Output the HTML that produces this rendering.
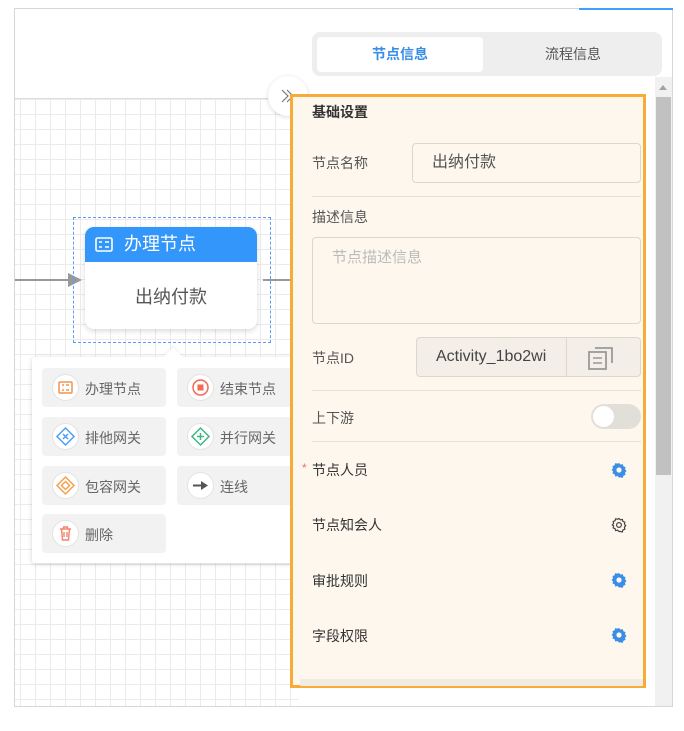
<!DOCTYPE html>
<html><head><meta charset="utf-8"><style>
*{box-sizing:border-box;margin:0;padding:0}
body{width:684px;height:731px;background:#fff;position:relative;overflow:hidden;font-family:"Liberation Sans","Noto Sans CJK SC",sans-serif;}
.abs{position:absolute}
.frame{left:14px;top:8px;width:659px;height:699px;border:1px solid #d6d6d6;}
.grid{left:15px;top:98px;width:283px;height:608px;border-top:1px solid #ddd;
background-image:linear-gradient(#ebebeb 1px,transparent 1px),linear-gradient(90deg,#ebebeb 1px,transparent 1px);background-size:15px 15px;background-position:5px 0}
.lbl{position:absolute;left:312px;font-size:14px;color:#555}
.div{position:absolute;left:312px;width:329px;height:1px;background:#eadfd0}
.btn{position:absolute;width:124px;height:39px;background:#f2f2f2;border-radius:4px;font-size:14px;color:#666}
.btn .ic{position:absolute;left:10px;top:6px;width:27px;height:27px;border-radius:50%;background:#fff;border:1px solid #e3e3e3}
.btn span{position:absolute;left:43px;top:11px}
</style></head><body>
<div class="abs frame"></div>
<div class="abs" style="left:579px;top:8px;width:94px;height:2px;background:#409eff"></div>
<div class="abs grid"></div>
<div class="abs" style="left:15px;top:279px;width:56px;height:2px;background:#999"></div>
<div class="abs" style="left:68px;top:273px;width:0;height:0;border-left:14px solid #999;border-top:7px solid transparent;border-bottom:7px solid transparent"></div>
<div class="abs" style="left:263px;top:279px;width:35px;height:2px;background:#999"></div>
<div class="abs" style="left:73px;top:217px;width:198px;height:126px;border:1.5px dashed #5a9cf8"></div>
<div class="abs" style="left:85px;top:227px;width:172px;height:102px;background:#fff;border-radius:9px;box-shadow:0 2px 6px rgba(0,0,0,.15);overflow:hidden">
<div style="height:35px;background:#3296fa;color:#fff;font-size:18px;line-height:35px;padding-left:39px;position:relative">办理节点
<svg style="position:absolute;left:10px;top:10px" width="18" height="15" viewBox="0 0 18 15"><rect x="1" y="1" width="16" height="13" rx="1.5" fill="none" stroke="#fff" stroke-width="1.6"/><path d="M4 5h3M4 10h3M10 5h4M10 10h4" stroke="#fff" stroke-width="1.6"/></svg></div>
<div style="text-align:center;font-size:18px;color:#555;margin-top:21px">出纳付款</div></div>
<div class="abs" style="left:32px;top:357px;width:266px;height:206px;background:#fff;box-shadow:0 1px 5px rgba(0,0,0,.18);border-radius:3px"></div>
<div class="abs" style="left:166px;top:350px;width:14px;height:14px;background:#fff;transform:rotate(45deg);box-shadow:-1px -1px 2px rgba(0,0,0,.06)"></div>
<div class="btn" style="left:42px;top:368px"><div class="ic"><svg width="25" height="25" viewBox="0 0 25 25"><rect x="6" y="7" width="13" height="11" rx="1" fill="none" stroke="#f0944d" stroke-width="1.5"/><path d="M9 10h2M9 15h2M13 10h3M13 15h3" stroke="#f0944d" stroke-width="1.5"/></svg></div><span>办理节点</span></div>
<div class="btn" style="left:177px;top:368px;width:121px"><div class="ic"><svg width="25" height="25"><circle cx="12.5" cy="12.5" r="7.5" fill="none" stroke="#f26b54" stroke-width="1.5"/><rect x="9.5" y="9.5" width="6" height="6" fill="#f26b54"/></svg></div><span>结束节点</span></div>
<div class="btn" style="left:42px;top:417px"><div class="ic"><svg width="25" height="25"><path d="M12.5 4L21 12.5 12.5 21 4 12.5Z" fill="none" stroke="#4d9ef7" stroke-width="1.5"/><path d="M10 10l5 5M15 10l-5 5" stroke="#4d9ef7" stroke-width="1.5"/></svg></div><span>排他网关</span></div>
<div class="btn" style="left:177px;top:417px;width:121px"><div class="ic"><svg width="25" height="25"><path d="M12.5 4L21 12.5 12.5 21 4 12.5Z" fill="none" stroke="#3cb982" stroke-width="1.5"/><path d="M12.5 9v7M9 12.5h7" stroke="#3cb982" stroke-width="1.5"/></svg></div><span>并行网关</span></div>
<div class="btn" style="left:42px;top:466px"><div class="ic"><svg width="25" height="25"><path d="M12.5 4L21 12.5 12.5 21 4 12.5Z" fill="none" stroke="#f5a04d" stroke-width="1.5"/><path d="M12.5 8.5L16.5 12.5 12.5 16.5 8.5 12.5Z" fill="none" stroke="#f5a04d" stroke-width="1.5"/></svg></div><span>包容网关</span></div>
<div class="btn" style="left:177px;top:466px;width:121px"><div class="ic"><svg width="25" height="25"><path d="M5 12.5h9" stroke="#555" stroke-width="2"/><path d="M13 8l7 4.5-7 4.5Z" fill="#555"/></svg></div><span>连线</span></div>
<div class="btn" style="left:42px;top:514px"><div class="ic"><svg width="25" height="25"><path d="M7 8h11M10.5 8V6h4v2M8.5 8l1 11h6l1-11M11 11v5M14 11v5" fill="none" stroke="#f2836b" stroke-width="1.4"/></svg></div><span>删除</span></div>
<div class="abs" style="left:298px;top:77px;width:357px;height:629px;background:#fff"></div>
<div class="abs" style="left:655px;top:77px;width:17px;height:629px;background:#f1f1f1"></div>
<div class="abs" style="left:656px;top:97px;width:15px;height:378px;background:#c1c1c1"></div>
<div class="abs" style="left:659px;top:85px;width:0;height:0;border-left:4.5px solid transparent;border-right:4.5px solid transparent;border-bottom:5px solid #a3a3a3"></div>
<div class="abs" style="left:312px;top:32px;width:350px;height:44px;background:#eee;border-radius:8px"></div>
<div class="abs" style="left:317px;top:37px;width:166px;height:35px;background:#fff;border-radius:4px;text-align:center;line-height:35px;color:#3a8ee6;font-weight:bold;font-size:14px">节点信息</div>
<div class="abs" style="left:490px;top:37px;width:166px;height:35px;text-align:center;line-height:35px;color:#555;font-size:14px">流程信息</div>
<div class="abs" style="left:268px;top:76px;width:40px;height:40px;border-radius:50%;background:#fff;box-shadow:0 1px 4px rgba(0,0,0,.15)"></div>
<svg class="abs" style="left:280px;top:88px" width="16" height="16" viewBox="0 0 16 16"><path d="M2 2l6 6-6 6M7 2l6 6-6 6" fill="none" stroke="#777" stroke-width="1.2"/></svg>
<div class="abs" style="left:290px;top:94px;width:356px;height:594px;border:3px solid #f7ac38;background:#fdf7ee"></div>
<div class="abs" style="left:300px;top:679px;width:343px;height:7px;background:#f2ebe2"></div>
<div class="lbl" style="top:102px;font-weight:bold;color:#333">基础设置</div>
<div class="lbl" style="top:153px">节点名称</div>
<div class="abs" style="left:412px;top:143px;width:229px;height:40px;border:1px solid #ddd6cc;border-radius:4px;font-size:16px;color:#555;line-height:38px;padding-left:19px">出纳付款</div>
<div class="div" style="top:196px"></div>
<div class="lbl" style="top:207px">描述信息</div>
<div class="abs" style="left:312px;top:237px;width:329px;height:87px;border:1px solid #ddd6cc;border-radius:4px;font-size:15px;color:#bbb;padding:8px 0 0 19px">节点描述信息</div>
<div class="lbl" style="top:348px">节点ID</div>
<div class="abs" style="left:416px;top:337px;width:225px;height:40px;border:1px solid #ddd6cc;border-radius:4px;background:#f3efe8;font-size:16px;color:#444;line-height:38px;padding-left:19px">Activity_1bo2wi</div>
<div class="abs" style="left:566px;top:338px;width:1px;height:38px;background:#ddd6cc"></div>
<svg class="abs" style="left:587px;top:344px" width="28" height="28" viewBox="0 0 28 28"><rect x="2" y="8" width="17" height="17" fill="none" stroke="#999" stroke-width="1.8"/><path d="M8 4h17v15" fill="none" stroke="#999" stroke-width="1.8"/><path d="M6 14h9M6 19h9" stroke="#999" stroke-width="1.6"/></svg>
<div class="div" style="top:390px"></div>
<div class="lbl" style="top:408px">上下游</div>
<div class="abs" style="left:591px;top:404px;width:50px;height:25px;border-radius:13px;background:#e2dfd9"></div>
<div class="abs" style="left:593px;top:406px;width:21px;height:21px;border-radius:50%;background:#fff"></div>
<div class="div" style="top:441px"></div>
<div class="abs" style="left:302px;top:461px;color:#f56c6c;font-size:12px">*</div>
<div class="lbl" style="top:460px;color:#333">节点人员</div>
<div class="lbl" style="top:515px;color:#333">节点知会人</div>
<div class="lbl" style="top:571px;color:#333">审批规则</div>
<div class="lbl" style="top:626px;color:#333">字段权限</div>
<svg class="abs" style="left:611px;top:462px" width="16" height="16" viewBox="0 0 16 16"><path d="M8 1l1.6 1.6 2.2-.5.6 2.2 2.1.8-.5 2.2 1.5 1.7-1.5 1.7.5 2.2-2.1.8-.6 2.2-2.2-.5L8 15.5 6.4 14l-2.2.5-.6-2.2-2.1-.8.5-2.2L.5 8l1.5-1.7-.5-2.2 2.1-.8.6-2.2 2.2.5Z" fill="#3a8ee6"/><circle cx="8" cy="8" r="2.6" fill="#fdf7ee"/></svg>
<svg class="abs" style="left:611px;top:517px" width="16" height="16" viewBox="0 0 16 16"><path d="M8 1.5l1.4 1.4 2-.4.5 1.9 1.9.8-.4 2 1.3 1.5-1.3 1.5.4 2-1.9.8-.5 1.9-2-.4L8 14.5 6.6 13.2l-2 .4-.5-1.9-1.9-.8.4-2L1.3 8l1.3-1.5-.4-2 1.9-.8.5-1.9 2 .4Z" fill="none" stroke="#444" stroke-width="1.2"/><circle cx="8" cy="8" r="2.4" fill="none" stroke="#444" stroke-width="1.2"/></svg>
<svg class="abs" style="left:611px;top:572px" width="16" height="16" viewBox="0 0 16 16"><path d="M8 1l1.6 1.6 2.2-.5.6 2.2 2.1.8-.5 2.2 1.5 1.7-1.5 1.7.5 2.2-2.1.8-.6 2.2-2.2-.5L8 15.5 6.4 14l-2.2.5-.6-2.2-2.1-.8.5-2.2L.5 8l1.5-1.7-.5-2.2 2.1-.8.6-2.2 2.2.5Z" fill="#3a8ee6"/><circle cx="8" cy="8" r="2.6" fill="#fdf7ee"/></svg>
<svg class="abs" style="left:611px;top:627px" width="16" height="16" viewBox="0 0 16 16"><path d="M8 1l1.6 1.6 2.2-.5.6 2.2 2.1.8-.5 2.2 1.5 1.7-1.5 1.7.5 2.2-2.1.8-.6 2.2-2.2-.5L8 15.5 6.4 14l-2.2.5-.6-2.2-2.1-.8.5-2.2L.5 8l1.5-1.7-.5-2.2 2.1-.8.6-2.2 2.2.5Z" fill="#3a8ee6"/><circle cx="8" cy="8" r="2.6" fill="#fdf7ee"/></svg>
</body></html>
